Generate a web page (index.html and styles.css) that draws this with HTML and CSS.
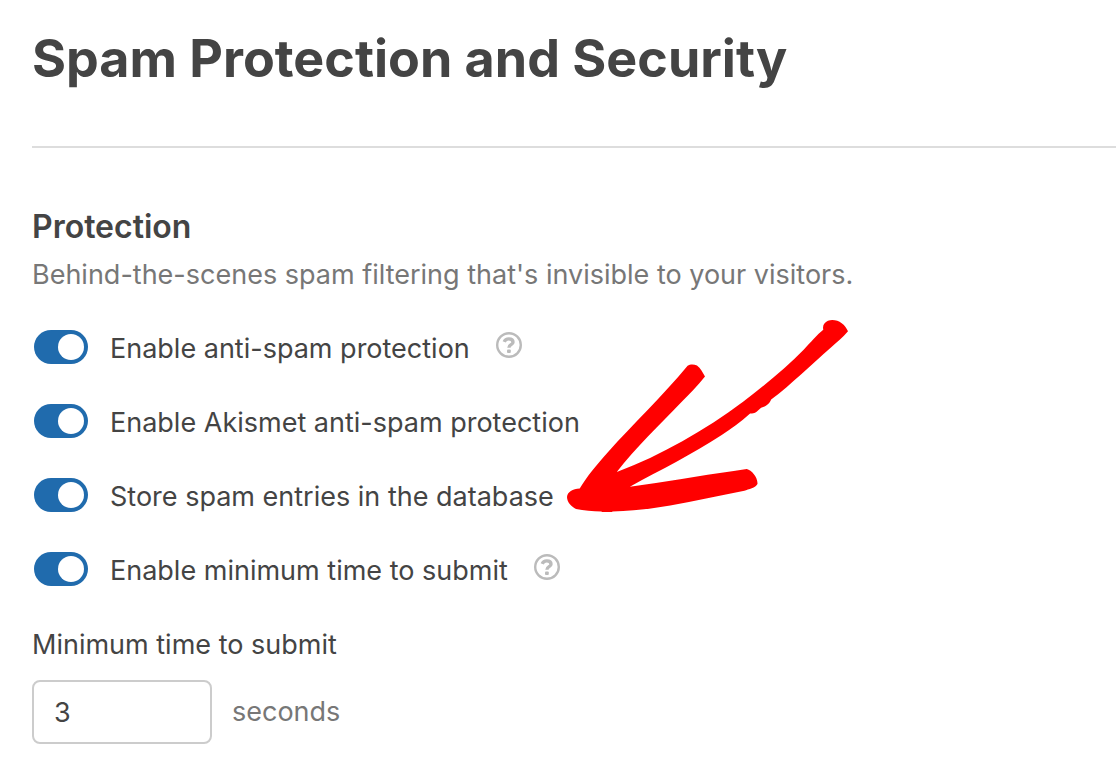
FILE: index.html
```html
<!DOCTYPE html>
<html lang="en">
<head>
    <meta charset="UTF-8">
    <meta name="viewport" content="width=device-width, initial-scale=1.0">
    <title>Spam Protection and Security</title>
    <link rel="stylesheet" href="styles.css">
</head>
<body>
    <main class="panel">
        <h1>Spam Protection and Security</h1>

        <section class="protection">
            <h2>Protection</h2>
            <p class="description">Behind-the-scenes spam filtering that's invisible to your visitors.</p>

            <div class="toggle-row">
                <input type="checkbox" class="toggle" id="antispam" checked>
                <label for="antispam">Enable anti-spam protection</label>
                <button type="button" class="help" aria-label="Help with anti-spam protection">
                    <svg viewBox="0 0 26 26"><circle cx="13" cy="13" r="11.8"/><path class="mark" d="M8.2 9.8C9 7.8 10.6 6.9 12.8 6.9c2.4 0 4.2 1.2 4.2 3.3 0 2.7-4.1 2.3-4.1 5.6"/><rect class="dot" x="11" y="17.5" width="3.8" height="3.6" rx="1"/></svg>
                </button>
            </div>
            <div class="toggle-row">
                <input type="checkbox" class="toggle" id="akismet" checked>
                <label for="akismet">Enable Akismet anti-spam protection</label>
            </div>
            <div class="toggle-row">
                <input type="checkbox" class="toggle" id="store" checked>
                <label for="store">Store spam entries in the database</label>
                <svg class="arrow" viewBox="21 27 841 576" aria-hidden="true">
                    <path d="M788 56C785 42 792 34 802 29C829 22 852 38 862 61C846 80 829 94 811 109C752 160 693 219 632 265C627 280 612 287 602 290C592 299 584 308 573 307L569 307C540 333 512 353 484 371C396 429 303 474 209 526C314 513 415 493 520 479C533 477 546 474 559 473C574 476 593 500 591 518C586 529 564 534 552 538C477 552 405 570 330 582C274 592 217 599 157 600L155 603H127L124 600C98 600 71 598 48 593C34 586 21 572 21 557C22 541 38 532 59 531C79 497 112 457 142 424C220 337 305 257 382 164C389 159 401 159 410 163C421 171 427 184 434 196C412 224 388 248 363 273C298 341 228 407 170 482C305 431 432 358 549 271C612 223 678 168 730 115C750 94 770 70 788 56Z"/>
                </svg>
            </div>
            <div class="toggle-row">
                <input type="checkbox" class="toggle" id="mintime" checked>
                <label for="mintime">Enable minimum time to submit</label>
                <button type="button" class="help" aria-label="Help with minimum time to submit">
                    <svg viewBox="0 0 26 26"><circle cx="13" cy="13" r="11.8"/><path class="mark" d="M8.2 9.8C9 7.8 10.6 6.9 12.8 6.9c2.4 0 4.2 1.2 4.2 3.3 0 2.7-4.1 2.3-4.1 5.6"/><rect class="dot" x="11" y="17.5" width="3.8" height="3.6" rx="1"/></svg>
                </button>
            </div>

            <label class="field-label" for="seconds">Minimum time to submit</label>
            <div class="field">
                <input type="text" inputmode="numeric" class="seconds" id="seconds" value="3">
                <span>seconds</span>
            </div>
        </section>
    </main>
</body>
</html>
```
FILE: styles.css
```css
* {
    margin: 0;
    padding: 0;
    box-sizing: border-box;
}

body {
    background: #fff;
    color: #444;
    font-family: Inter, sans-serif;
    font-size: 27px;
    line-height: 34px;
}

.panel {
    padding: 24px 0 18px 32px;
}

h1 {
    padding-bottom: 52px;
    border-bottom: 2px solid #ddd;
    font-size: 52px;
    font-weight: 700;
    line-height: 70px;
}

.protection {
    padding-top: 62px;
}

h2 {
    font-size: 32px;
    font-weight: 600;
    line-height: 34px;
}

.description {
    margin: 14px 0 38px;
    color: #777;
}

.toggle-row {
    position: relative;
    display: flex;
    align-items: center;
    height: 34px;
    margin-bottom: 40px;
    padding-left: 2px;
}

.toggle-row label {
    padding-top: 4px;
}

.toggle {
    appearance: none;
    display: flex;
    justify-content: flex-end;
    width: 54px;
    height: 34px;
    margin-right: 22px;
    padding: 4px;
    border-radius: 17px;
    background: #206bad;
    cursor: pointer;
}

.toggle::before {
    content: "";
    width: 26px;
    height: 26px;
    border-radius: 50%;
    background: #fff;
}

.toggle:not(:checked) {
    justify-content: flex-start;
    background: #bbb;
}

.help {
    width: 26px;
    height: 26px;
    margin: 0 0 4px 26px;
    border: 0;
    background: none;
    cursor: pointer;
}

.help svg {
    display: block;
    fill: none;
    stroke: #bbb;
    stroke-width: 2.4;
}

.help .mark {
    stroke-width: 3.4;
}

.help .dot {
    fill: #bbb;
    stroke: none;
}

/* hand-drawn arrow pointing at the spam entries toggle */
.arrow {
    position: absolute;
    left: 535px;
    bottom: 0;
    width: 281px;
    fill: #f00;
}

.field-label {
    display: block;
    padding-top: 2px;
}

.field {
    display: flex;
    align-items: center;
    gap: 20px;
    margin-top: 18px;
    color: #777;
}

.seconds {
    width: 180px;
    height: 64px;
    padding: 0 20px;
    border: 2px solid #ccc;
    border-radius: 8px;
    background: #fff;
    color: #444;
    font: inherit;
}
```
